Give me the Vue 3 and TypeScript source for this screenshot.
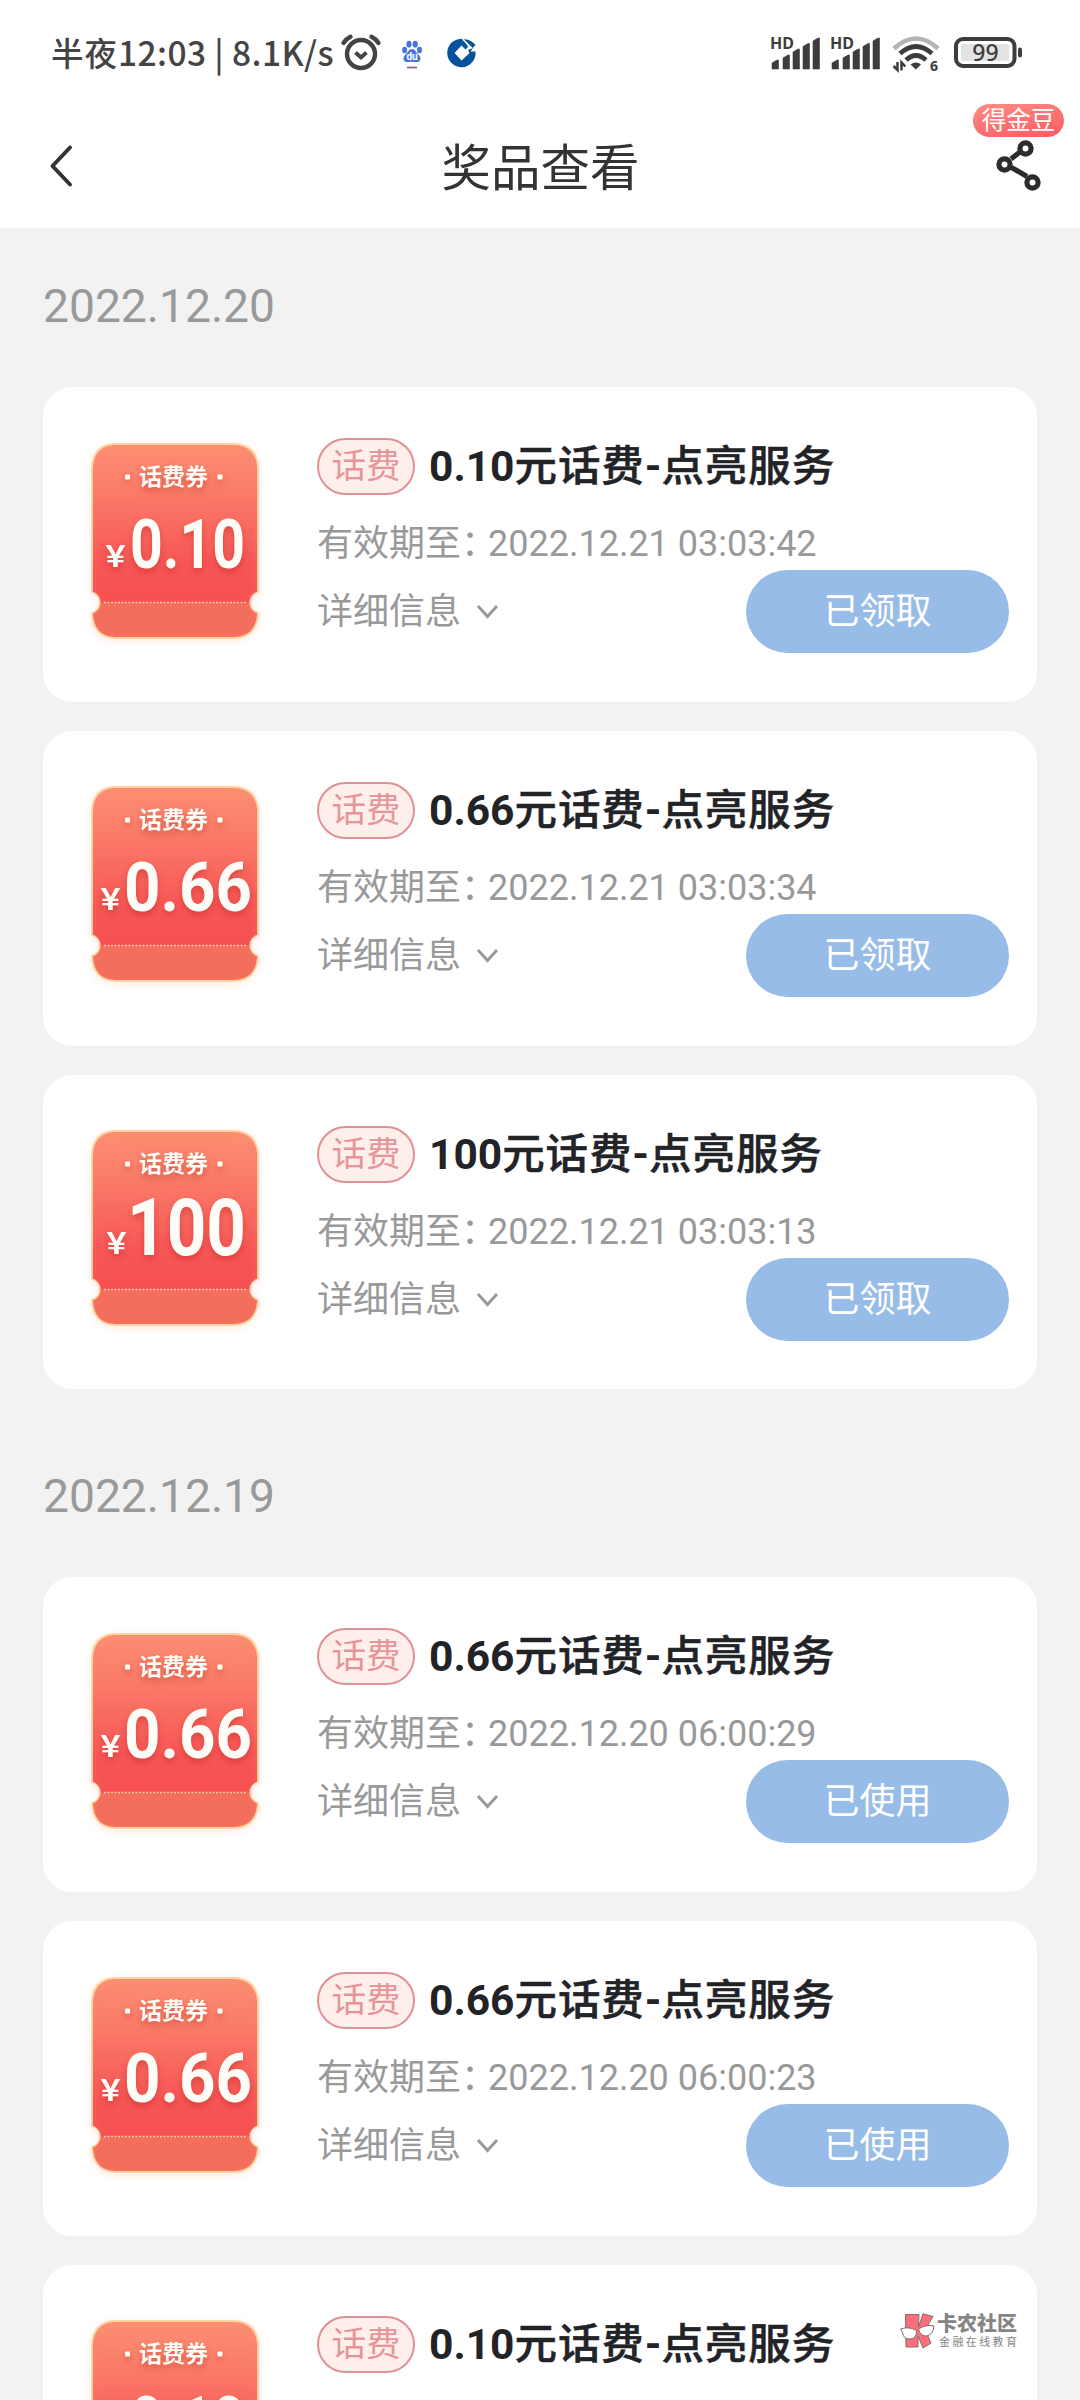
<script setup lang="ts">
interface Prize {
  id: number
  amount: string
  expires: string
  status: string
}

interface PrizeGroup {
  date: string
  prizes: Prize[]
}

interface AmountLayout {
  x: number
  width: number
  size: number
  yenX: number
}

const groups: PrizeGroup[] = [
  {
    date: '2022.12.20',
    prizes: [
      { id: 1, amount: '0.10', expires: '2022.12.21 03:03:42', status: '已领取' },
      { id: 2, amount: '0.66', expires: '2022.12.21 03:03:34', status: '已领取' },
      { id: 3, amount: '100', expires: '2022.12.21 03:03:13', status: '已领取' },
    ],
  },
  {
    date: '2022.12.19',
    prizes: [
      { id: 4, amount: '0.66', expires: '2022.12.20 06:00:29', status: '已使用' },
      { id: 5, amount: '0.66', expires: '2022.12.20 06:00:23', status: '已使用' },
      { id: 6, amount: '0.10', expires: '2022.12.20 06:00:11', status: '已使用' },
    ],
  },
]

const amountLayouts: Record<string, AmountLayout> = {
  '0.10': { x: 39, width: 115, size: 69, yenX: 14.5 },
  '0.66': { x: 33, width: 128, size: 69, yenX: 9.5 },
  '100': { x: 36, width: 119, size: 79, yenX: 15.5 },
}

const signalBars = [
  { x: 2, top: 24 },
  { x: 13, top: 19 },
  { x: 23, top: 13 },
  { x: 33, top: 7.5 },
  { x: 43, top: 2 },
]
</script>

<template>
  <div class="screen">
    <header class="top">
      <div class="status">
        <span class="clock">半夜<span class="clock-digits">12:03 | 8.1K/s</span></span>
        <svg class="alarm" width="40" height="40" viewBox="0 0 40 40" fill="none" stroke="#444" stroke-linecap="round">
          <circle cx="20" cy="21" r="14" stroke-width="4.400" />
          <path d="M14.5 19.5l5.5 5 5.5-5" stroke-width="3.800" stroke-linecap="butt" />
          <path d="M2.500 10Q5 6 9.500 3.800M37.500 10Q35 6 30.500 3.800" stroke-width="4.400" />
        </svg>
        <svg class="paw" width="20" height="30" viewBox="0 0 20 30">
          <g fill="#4a74d8">
            <ellipse cx="2.600" cy="10" rx="2.500" ry="3.200" />
            <ellipse cx="7" cy="4.200" rx="2.600" ry="3.400" />
            <ellipse cx="13.200" cy="4.200" rx="2.600" ry="3.400" />
            <ellipse cx="17.500" cy="10" rx="2.500" ry="3.200" />
            <path d="M10 9c3 0 4 3 6 5s3.400 4 2 6.500c-1.400 2.300-4.500 1.200-8 1.200s-6.600 1.100-8-1.200C.6 18 2 16 4 14s3-5 6-5z" />
          </g>
          <text x="10" y="20" class="paw-text">du</text>
          <path d="M5 27.500h10" stroke="#8c6788" stroke-width="1.800" />
        </svg>
        <svg class="bank" width="30" height="30" viewBox="0 0 30 30">
          <path d="M17 1A14.200 14.200 0 1 0 28.500 17H20.500L14.500 22.500 7.500 15l7-7.500 4 4L21 9z" fill="#07529b" />
          <path d="M18.500 1.200Q25 2.500 28.500 7L25.500 10 17 1.500zM21 12L26 10l-2.500 3.500h5V17h-8l2-2z" fill="#07529b" />
          <path d="M15.500 1l9 9" stroke="#fff" stroke-width="1.400" />
        </svg>
        <div class="system">
          <svg v-for="sim in 2" :key="sim" class="signal" width="52" height="44" viewBox="0 -10 52 44">
            <text x="0" y="13" class="hd" textLength="24" lengthAdjust="spacingAndGlyphs">HD</text>
            <path
              v-for="bar in signalBars"
              :key="bar.x"
              :d="`M${bar.x} ${bar.top + 3}l5-3h1.500v9V33h-6.500z`"
              fill="#3d3d3d"
              stroke="#3d3d3d"
              stroke-width=".6"
              stroke-linejoin="round"
            />
          </svg>
          <svg class="wifi" width="48" height="44" viewBox="0 -4 48 44" fill="none">
            <path d="M2 13.500Q24-6.500 46 13.500" stroke="#b3b3b3" stroke-width="4.500" />
            <path d="M8 18.500Q24 4.500 40 18.500" stroke="#3d3d3d" stroke-width="4.700" />
            <path d="M14 25Q24 16 34 25" stroke="#3d3d3d" stroke-width="4.700" />
            <path d="M18.500 29.500q5.500-4 10.500 0l-5.200 5z" fill="#3d3d3d" />
            <path d="M5.500 27v8l-4-4M9.500 35.500v-8l3.800 4" stroke="#3d3d3d" stroke-width="2.500" />
            <text x="38" y="35.500" class="wifi-gen">6</text>
          </svg>
          <svg class="battery" width="70" height="32" viewBox="0 0 70 32">
            <rect x="2" y="2" width="58.500" height="27" rx="7" fill="#fff" stroke="#3d3d3d" stroke-width="4" />
            <rect x="7" y="7" width="48" height="17" rx="2" fill="#e3e3e3" />
            <rect x="64" y="10.500" width="4" height="10" rx="2" fill="#3d3d3d" />
            <text x="31.500" y="23.500" class="charge">99</text>
          </svg>
        </div>
      </div>
      <div class="nav">
        <svg class="back" width="24" height="42" viewBox="0 0 24 42">
          <path d="M20 2.500L2.500 21 20 39.500" fill="none" stroke="#333" stroke-width="4" stroke-linecap="round" stroke-linejoin="round" />
        </svg>
        <h1>奖品查看</h1>
        <div class="share">
          <span class="bonus">得金豆</span>
          <svg width="48" height="54" viewBox="0 0 48 54" fill="none" stroke="#2c2c2c" stroke-width="5.200">
            <path d="M25.500 14.500L16 22M16.500 30.500l15.500 9" />
            <circle cx="30.500" cy="11.500" r="5.600" />
            <circle cx="9.500" cy="27.500" r="5.600" />
            <circle cx="37.500" cy="45.500" r="5.600" />
          </svg>
        </div>
      </div>
    </header>

    <main>
      <section v-for="group in groups" :key="group.date">
        <h2>{{ group.date }}</h2>
        <article v-for="prize in group.prizes" :key="prize.id" class="card">
          <svg class="coupon" width="188" height="216" viewBox="-10 -10 188 216">
            <defs>
              <linearGradient :id="`face-${prize.id}`" x1="0" y1="0" x2="0" y2="1">
                <stop offset="0" stop-color="#fc8f72" />
                <stop offset=".3" stop-color="#fa7c68" />
                <stop offset=".75" stop-color="#f75656" />
                <stop offset="1" stop-color="#f75053" />
              </linearGradient>
              <clipPath :id="`shape-${prize.id}`">
                <path d="M24 1H143Q166 2 167 25V149A11 11 0 0 0 167 170Q166 194 143 195H24Q2 194 1 170A11 11 0 0 0 1 149V25Q2 2 24 1Z" />
              </clipPath>
            </defs>
            <g :clip-path="`url(#shape-${prize.id})`">
              <rect width="168" height="160" :fill="`url(#face-${prize.id})`" />
              <rect y="159.500" width="168" height="37" fill="#f36e5c" />
            </g>
            <path
              class="rim"
              d="M24 1H143Q166 2 167 25V149A11 11 0 0 0 167 170Q166 194 143 195H24Q2 194 1 170A11 11 0 0 0 1 149V25Q2 2 24 1Z"
            />
            <path d="M13 159.500H155" stroke="#ffc3a4" stroke-width="1.300" stroke-dasharray="2 1.500" />
            <g class="face-text">
              <rect x="34" y="31.500" width="5" height="5" rx="1" />
              <rect x="126.500" y="31.500" width="5" height="5" rx="1" />
              <text x="82.500" y="42" class="kind">话费券</text>
              <text :x="amountLayouts[prize.amount].yenX" y="123.500" class="yen" textLength="20" lengthAdjust="spacingAndGlyphs">¥</text>
              <text
                :x="amountLayouts[prize.amount].x"
                y="124.500"
                class="amount"
                :font-size="amountLayouts[prize.amount].size"
                :textLength="amountLayouts[prize.amount].width"
                lengthAdjust="spacingAndGlyphs"
              >{{ prize.amount }}</text>
            </g>
          </svg>
          <div class="info">
            <div class="heading">
              <span class="tag">话费</span>
              <h3>{{ prize.amount }}<span class="name">元话费</span>-<span class="name">点亮服务</span></h3>
            </div>
            <p class="expiry"><span class="label">有效期至：</span>{{ prize.expires }}</p>
            <div class="foot">
              <span class="details">
                详细信息
                <svg width="22" height="16" viewBox="0 0 22 16">
                  <path d="M1 2l9.500 10.500L20 2" fill="none" stroke="#999" stroke-width="3" />
                </svg>
              </span>
              <button type="button">{{ prize.status }}</button>
            </div>
          </div>
        </article>
      </section>
    </main>

    <aside class="mark">
      <svg width="35" height="36" viewBox="0 0 35 36" stroke="#8b6a6c" stroke-width="1">
        <path d="M5.500 1.500H19L18.500 14 23 .8 33 3.500 25 17 31 30 23 35 18 23V34H6z" fill="#f9707c" />
        <path d="M.5 16Q9 13 16.500 17.500 17 26 9.500 26 3 26 2.500 19zM18.500 16Q26 11 34 13 33 22 26.500 23 20 23 18.500 16z" fill="#fff" />
      </svg>
      <div class="mark-text">
        <strong>卡农社区</strong>
        <small>金融在线教育</small>
      </div>
    </aside>
  </div>
</template>

<style>
body {
  margin: 0;
  background: #f2f2f2;
}
</style>

<style scoped>
.screen {
  position: relative;
  width: 1080px;
  height: 2400px;
  overflow: hidden;
  background: #f2f2f2;
  font-family: Roboto, 'Noto Sans CJK SC', sans-serif;
}

h1,
h2,
h3,
p {
  margin: 0;
  font-weight: 400;
}

svg {
  display: block;
  flex: none;
  overflow: visible;
}

.top {
  height: 228px;
  background: #fff;
}

.status {
  display: flex;
  align-items: center;
  height: 106px;
  padding: 0 56px 0 51px;
}

.clock {
  width: 290px;
  margin-top: -3px;
  color: #444;
  font: 500 32.500px/48px 'Noto Sans CJK SC', sans-serif;
  letter-spacing: 1px;
  white-space: pre;
}

.clock-digits {
  font-size: 33.500px;
  letter-spacing: 0.400px;
}

.paw {
  margin: 4px 0 0 21px;
}

.paw-text {
  fill: #fff;
  font: 700 10px Roboto, sans-serif;
  text-anchor: middle;
}

.bank {
  margin-left: 25px;
}

.system {
  display: flex;
  align-items: center;
  margin-left: auto;
}

.signal {
  margin: -10px 8px 0 0;
}

.hd {
  fill: #3d3d3d;
  font: 700 16px 'Noto Sans', sans-serif;
}

.wifi {
  margin: 0 14px 0 2px;
}

.wifi-gen {
  fill: #3d3d3d;
  font: 700 14px 'Noto Sans', sans-serif;
}

.charge {
  fill: #3d3d3d;
  font: 500 23px 'Noto Sans', sans-serif;
  text-anchor: middle;
}

.nav {
  display: flex;
  align-items: center;
  justify-content: space-between;
  height: 122px;
  padding: 0 16px 0 50px;
}

.back {
  margin: -3px 34px 0 0;
}

h1 {
  margin-top: 4px;
  color: #333;
  font-size: 49.500px;
  line-height: 72px;
}

.share {
  display: flex;
  flex-direction: column;
  align-items: center;
  width: 91px;
  height: 122px;
}

.bonus {
  width: 91px;
  height: 33px;
  margin-top: -2px;
  border-radius: 17px;
  background: linear-gradient(170deg, #ff8c82, #fb5b64);
  color: #fff;
  font-size: 24.500px;
  line-height: 34px;
  text-align: center;
}

h2 {
  height: 159px;
  padding-left: 43px;
  color: #999;
  font-size: 46.200px;
  line-height: 157px;
}

.card {
  display: flex;
  box-sizing: border-box;
  width: 994px;
  height: 314.800px;
  margin: 0 43px 29px;
  padding: 45px 28px 0 38px;
  border-radius: 29px;
  background: #fff;
}

.rim {
  fill: none;
  stroke: #ffd2a2;
  stroke-width: 1.800;
  filter: drop-shadow(0 2px 3px rgb(255 150 110 / 45%));
}

.coupon {
  margin-top: 0.500px;
}

.face-text {
  fill: #fffdf8;
  filter: drop-shadow(0 4px 3px rgb(190 40 30 / 45%));
}

.kind {
  font: 700 23px 'Noto Sans CJK SC', sans-serif;
  text-anchor: middle;
}

.yen {
  font-family: Roboto, sans-serif;
  font-size: 32px;
  font-weight: 500;
}

.amount {
  font-family: Roboto, sans-serif;
  font-weight: 700;
}

.info {
  flex: 1;
  margin-left: 48px;
}

.heading {
  display: flex;
  align-items: center;
  height: 57px;
  margin-top: 6px;
}

.tag {
  box-sizing: border-box;
  width: 98px;
  height: 57px;
  border: 2px solid #df9295;
  border-radius: 29px;
  background: #ffefea;
  color: #e8949a;
  font-size: 34.500px;
  line-height: 53px;
  text-align: center;
}

h3 {
  margin-left: 14px;
  color: #222326;
  font-size: 42.500px;
  font-weight: 700;
  line-height: 57px;
  white-space: nowrap;
}

.name {
  font-weight: 500;
  letter-spacing: 0.900px;
  -webkit-text-stroke: 0.500px #222326;
}

.expiry {
  display: flex;
  margin-top: 22px;
  color: #999;
  font-size: 36px;
  line-height: 54px;
  white-space: nowrap;
}

.label {
  width: 171px;
}

.foot {
  display: flex;
  align-items: center;
  justify-content: space-between;
  margin-top: -1px;
}

.details {
  display: flex;
  align-items: center;
  gap: 16px;
  padding-top: 1px;
  color: #999;
  font-size: 36px;
  line-height: 54px;
}

button {
  width: 263px;
  height: 83px;
  padding: 1px 0 0;
  border: 0;
  border-radius: 42px;
  background: #98bce8;
  color: #fff;
  font: inherit;
  font-size: 36px;
  line-height: 82px;
}

.mark {
  position: absolute;
  top: 2313px;
  left: 900px;
  display: flex;
  gap: 2px;
  color: #858585;
  font-family: 'Noto Sans CJK SC', sans-serif;
}

.mark-text {
  display: flex;
  flex-direction: column;
}

.mark strong {
  font-size: 20px;
  font-weight: 900;
  line-height: 20px;
}

.mark small {
  margin-left: 2px;
  font-size: 11px;
  letter-spacing: 2.400px;
  line-height: 16px;
}
</style>
